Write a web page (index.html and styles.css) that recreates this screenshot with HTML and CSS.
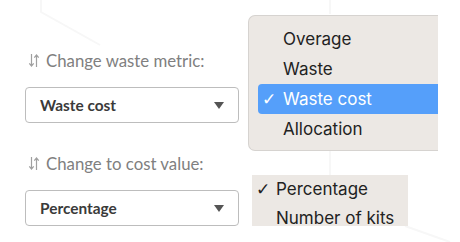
FILE: index.html
```html
<!DOCTYPE html>
<html lang="en">
<head>
    <meta charset="UTF-8">
    <title>Waste settings</title>
    <link rel="stylesheet" href="styles.css">
</head>
<body>

<!-- faint background shapes -->
<svg class="backdrop" width="460" height="242" viewBox="0 0 460 242">
    <polyline points="41,0 41,12 100,45" />
    <polyline points="330,14 330,0" />
    <polyline points="330,150 330,175" />
    <polyline points="405,226 450,242" />
</svg>

<div class="page">
    <!-- Waste metric -->
    <div class="group">
        <div class="label">
            <svg class="sort-icon" width="12" height="15" viewBox="0 0 12 15">
                <path d="M3.5 1v12M1.3 10.3l2.2 2.7 2.2-2.7M8.5 14V2M6.3 4.7l2.2-2.7 2.2 2.7" />
            </svg>
            Change waste metric:
        </div>
        <div class="select">
            <span>Waste cost</span>
            <span class="caret"></span>
        </div>

        <ul class="menu menu-metric">
            <li>Overage</li>
            <li>Waste</li>
            <li class="active"><span class="check">✓</span>Waste cost</li>
            <li>Allocation</li>
        </ul>
    </div>

    <!-- Cost value -->
    <div class="group group-cost">
        <div class="label">
            <svg class="sort-icon" width="12" height="15" viewBox="0 0 12 15">
                <path d="M3.5 1v12M1.3 10.3l2.2 2.7 2.2-2.7M8.5 14V2M6.3 4.7l2.2-2.7 2.2 2.7" />
            </svg>
            Change to cost value:
        </div>
        <div class="select">
            <span>Percentage</span>
            <span class="caret"></span>
        </div>

        <ul class="menu menu-cost">
            <li><span class="check">✓</span>Percentage</li>
            <li>Number of kits</li>
        </ul>
    </div>
</div>

</body>
</html>
```

FILE: styles.css
```css
body {
    margin: 0;
    background: #fff;
    font-family: Lato, "Noto Sans", sans-serif;
    overflow: hidden;
}
.backdrop {
    position: absolute;
    left: 0;
    top: 0;
}
.backdrop polyline {
    fill: none;
    stroke: #f7f7f7;
    stroke-width: 2;
}
.page {
    position: relative;
    padding: 50px 0 0 25px;
}
.group {
    position: relative;
    width: 214px;
}
.group-cost {
    margin-top: 30px;
}
.label {
    display: flex;
    align-items: center;
    gap: 6px;
    height: 20px;
    margin-left: 3px;
    margin-bottom: 17px;
    font-size: 16.8px;
    color: #808080;
}
.sort-icon path {
    fill: none;
    stroke: #a0a0a0;
    stroke-width: 1.2;
}
.select {
    display: flex;
    align-items: center;
    justify-content: space-between;
    box-sizing: border-box;
    height: 36px;
    padding: 0 14px 0 14px;
    border: 1px solid #bdbdbd;
    border-radius: 4px;
    font-size: 15.4px;
    font-weight: bold;
    color: #3a3a3a;
}
.caret {
    width: 0;
    height: 0;
    border-left: 5.5px solid transparent;
    border-right: 5.5px solid transparent;
    border-top: 7px solid #555;
}

/* popup menus */
.menu {
    position: absolute;
    margin: 0;
    list-style: none;
    background: #ece8e4;
    font-family: Inter, "Liberation Sans", sans-serif;
    font-size: 17px;
    color: #222;
}
.menu li {
    position: relative;
}
.check {
    position: absolute;
    font-family: "DejaVu Sans", sans-serif;
    font-size: 17px;
    font-weight: bold;
}
.menu-metric {
    left: 223px;
    top: -35px;
    width: 180px;
    padding: 8px 0 6px 9px;
    border: 1px solid #d6d3d0;
    border-right: none;
    border-radius: 7px 0 0 7px;
}
.menu-metric li {
    height: 30px;
    line-height: 30px;
    padding-left: 25px;
    border-radius: 4px 0 0 4px;
}
.menu-metric .check {
    left: 4px;
}
.menu-metric .active {
    background: #559ffa;
    color: #fff;
}
.menu-cost {
    left: 227px;
    top: 22px;
    width: 132px;
    height: 59px;
    padding: 0 0 0 24px;
}
.menu-cost li {
    height: 29px;
    line-height: 29px;
}
.menu-cost .check {
    left: -20px;
}
```
